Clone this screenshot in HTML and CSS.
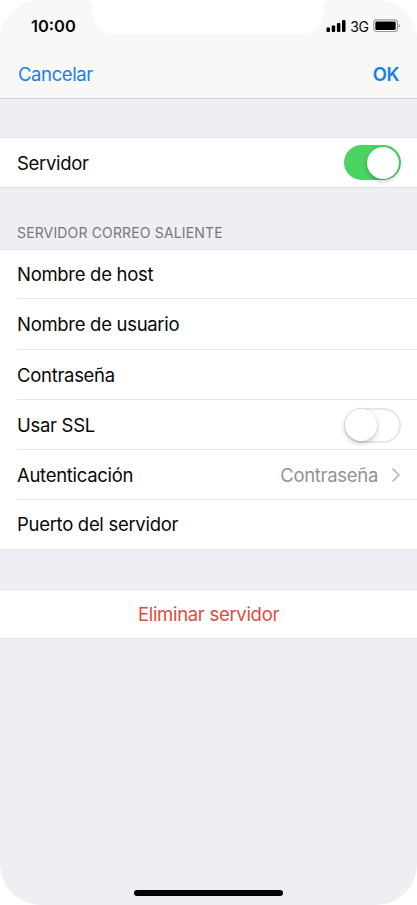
FILE: index.html
```
<!DOCTYPE html>
<html lang="es">
<head>
<meta charset="utf-8">
<title>Servidor</title>
<link rel="stylesheet" href="styles.css">
</head>
<body>
<main class="phone">
  <header class="top">
    <svg class="notch" width="240" height="34" viewBox="0 0 240 34"><path d="M0 0C3 1.500 4 4 4 9C4 23 13 33.500 27 33.500H214C228 33.500 236 23 236 10C236 4 237 1.500 240 0Z" fill="#fff"/></svg>
    <div class="status">
      <span class="time">10:00</span>
      <div class="indicators">
        <svg width="20" height="14" viewBox="0 0 20 14"><rect x="0.500" y="8.500" width="3.500" height="4.500" rx="1"/><rect x="5.700" y="6.500" width="3.500" height="6.500" rx="1"/><rect x="10.900" y="4" width="3.500" height="9" rx="1"/><rect x="16" y="1" width="3.500" height="12" rx="1"/></svg>
        <span class="network">3G</span>
        <svg width="27" height="14" viewBox="0 0 27 14"><rect x="0.700" y="0.900" width="23.800" height="11.600" rx="3" fill="#fff" stroke="#999" stroke-width="1.100"/><rect x="2.300" y="2.500" width="20.400" height="8.400" rx="1.400"/><path d="M25.600 4.700Q27 5.200 27 6.700Q27 8.200 25.600 8.700Z" fill="#999"/></svg>
      </div>
    </div>
    <nav class="nav"><span class="cancel">Cancelar</span><span class="ok">OK</span></nav>
  </header>
  <section class="card first">
    <div class="row"><span class="label">Servidor</span><span class="switch on"><i class="knob"></i></span></div>
  </section>
  <h2 class="heading">SERVIDOR CORREO SALIENTE</h2>
  <section class="card">
    <div class="row short"><span class="label">Nombre de host</span></div>
    <div class="row tall"><span class="label">Nombre de usuario</span></div>
    <div class="row"><span class="label">Contraseña</span></div>
    <div class="row lower"><span class="label">Usar SSL</span><span class="switch"><i class="knob"></i></span></div>
    <div class="row lower"><span class="label">Autenticación</span><span class="value">Contraseña</span><svg class="chevron" width="10" height="16" viewBox="0 0 10 16"><path d="M1.500 1.500L8 8L1.500 14.500" fill="none" stroke="#c3c3c8" stroke-width="1.900"/></svg></div>
    <div class="row last"><span class="label">Puerto del servidor</span></div>
  </section>
  <section class="card danger"><span class="label">Eliminar servidor</span></section>
  <div class="home"></div>
</main>
</body>
</html>
```

FILE: styles.css
```
* { box-sizing: border-box; }
body { margin: 0; background: #fff; font-family: Inter, "Liberation Sans", sans-serif; color: #080808; }
.phone { position: relative; width: 417px; height: 905px; overflow: hidden; border-radius: 41px; background: #efeef4; }
.top { position: relative; height: 99px; background: #f8f8f9; border-bottom: 1px solid #d3d3d7; }
.notch { position: absolute; left: 88px; top: 0; }
.status { height: 50px; padding: 2px 16px 0 31px; display: flex; align-items: center; justify-content: space-between; }
.time { font-size: 16.500px; font-weight: 600; }
.indicators { display: flex; align-items: center; gap: 4.500px; margin-right: 1px; }
.network { font-size: 14px; letter-spacing: -.4px; }
.nav { height: 48px; padding: 0 18px; display: flex; align-items: center; justify-content: space-between; font-size: 18.500px; color: #1780e8; }
.cancel { letter-spacing: -.4px; }
.ok { font-weight: 600; letter-spacing: -.5px; }
.card { background: #fff; border-top: 1px solid #e4e4e8; border-bottom: 1px solid #e4e4e8; }
.first { margin-top: 38px; height: 51px; }
.first .row { height: 49px; }
.row { height: 50px; margin-left: 17px; padding-right: 16px; display: flex; align-items: center; }
.row.short { height: 48px; }
.row.tall { height: 51px; padding-bottom: 1px; }
.row.lower { padding-top: 1px; }
.row + .row { border-top: 1px solid #e6e6e8; }
.row.last { padding-bottom: 1px; }
.label { font-size: 18.500px; letter-spacing: -.3px; }
.value { margin-left: auto; font-size: 18.500px; letter-spacing: -.3px; color: #929296; }
.chevron { margin-left: 13px; }
.heading { height: 61px; margin: 0; padding: 36px 17px 0; font-size: 14px; line-height: 18px; font-weight: 400; letter-spacing: .15px; color: #77777c; }
.switch { margin-left: auto; width: 57px; height: 35px; border-radius: 18px; border: 2px solid #e6e6e8; display: flex; align-items: center; background: #fff; }
.knob { width: 32px; height: 32px; border-radius: 50%; background: #fff; box-shadow: 0 2px 5px rgba(0,0,0,.25); margin-left: -1px; }
.switch.on { background: #4cd463; border-color: #4cd463; justify-content: flex-end; }
.danger { height: 50px; margin-top: 39px; display: flex; align-items: center; justify-content: center; color: #e14b42; }
.home { position: absolute; left: 134px; top: 890px; width: 149px; height: 6px; border-radius: 3px; background: #000; }
```
